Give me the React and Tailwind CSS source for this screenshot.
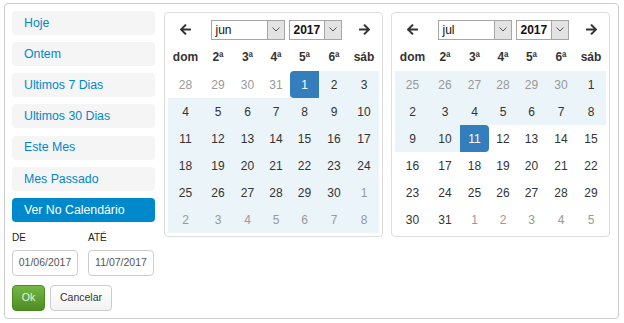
import React from 'react';

const FONT = { fontFamily: '"Liberation Sans", Arial, sans-serif' };

const RANGES = ['Hoje', 'Ontem', 'Ultimos 7 Dias', 'Ultimos 30 Dias', 'Este Mes', 'Mes Passado', 'Ver No Calendário'];
const DAY_NAMES = ['dom', '2ª', '3ª', '4ª', '5ª', '6ª', 'sáb'];

const range = (a, b) => Array.from({ length: b - a + 1 }, (_, i) => a + i);

const CALENDARS = [
  {
    month: 'jun',
    days: [...range(28, 31), ...range(1, 30), ...range(1, 8)],
    offBefore: 4,
    offAfter: 34,
    rangeFrom: 4,
    rangeTo: 41,
    start: 4,
    end: -1,
  },
  {
    month: 'jul',
    days: [...range(25, 30), ...range(1, 31), ...range(1, 5)],
    offBefore: 6,
    offAfter: 37,
    rangeFrom: 0,
    rangeTo: 16,
    start: -1,
    end: 16,
  },
];

const ArrowLeft = () => (
  <svg width="11" height="11" viewBox="0 40 448 432" fill="#333">
    <path d="M257.5 445.1l-22.2 22.2c-9.4 9.4-24.6 9.4-33.9 0L7 273c-9.4-9.4-9.4-24.6 0-33.9L201.4 44.7c9.4-9.4 24.6-9.4 33.9 0l22.2 22.2c9.5 9.5 9.3 25-.4 34.3L136.6 216H424c13.3 0 24 10.7 24 24v32c0 13.3-10.7 24-24 24H136.6l120.5 114.8c9.8 9.3 10 24.8.4 34.3z" />
  </svg>
);

const ArrowRight = () => (
  <svg width="11" height="11" viewBox="0 40 448 432" fill="#333">
    <path d="M190.5 66.9l22.2-22.2c9.4-9.4 24.6-9.4 33.9 0L441 239c9.4 9.4 9.4 24.6 0 33.9L246.6 467.3c-9.4 9.4-24.6 9.4-33.9 0l-22.2-22.2c-9.5-9.5-9.3-25 .4-34.3L311.4 296H24c-13.3 0-24-10.7-24-24v-32c0-13.3 10.7-24 24-24h287.4L190.9 101.2c-9.8-9.3-10-24.8-.4-34.3z" />
  </svg>
);

const Select = ({ value, width, bold }) => (
  <div className={`flex h-[20px] border border-[#a6a6a6] bg-white ${width}`}>
    <span className={`flex-1 pl-[4px] text-[12px] leading-[18px] text-[#111] ${bold ? 'font-bold' : ''}`}>{value}</span>
    <span className="w-[17px] flex items-center justify-center bg-[#e3e3e3] border-l border-[#a6a6a6]">
      <svg width="8" height="5" viewBox="0 0 8 5">
        <polyline points="0.5,0.5 4,4 7.5,0.5" fill="none" stroke="#555" strokeWidth="1" />
      </svg>
    </span>
  </div>
);

const Calendar = ({ cal }) => (
  <div className="w-[219px] h-[225px] border border-[#ddd] rounded-[4px] bg-white p-[3px]">
    <div className="grid grid-cols-[35px_30px_29px_28px_29px_30px_30px] text-[12px] text-[#333]">
      <div className="h-[27px] flex items-center justify-center"><ArrowLeft /></div>
      <div className="col-span-5 h-[27px] flex items-center justify-center gap-[4px]">
        <Select value={cal.month} width="w-[74px]" />
        <Select value="2017" width="w-[53px]" bold />
      </div>
      <div className="h-[27px] flex items-center justify-center"><ArrowRight /></div>

      {DAY_NAMES.map((d) => (
        <div key={d} className="h-[28px] flex items-center justify-center font-bold">{d}</div>
      ))}

      {cal.days.map((n, i) => {
        const off = i < cal.offBefore || i >= cal.offAfter;
        const inRange = i >= cal.rangeFrom && i <= cal.rangeTo;
        let cls = 'h-[27px] flex items-center justify-center';
        if (i === cal.start) cls += ' bg-[#357ebd] text-white rounded-l-[4px]';
        else if (i === cal.end) cls += ' bg-[#357ebd] text-white rounded-r-[4px]';
        else {
          if (inRange) cls += ' bg-[#ebf4f8]';
          if (off) cls += ' text-[#999]';
        }
        return <div key={i} className={cls}>{n}</div>;
      })}
    </div>
  </div>
);

export default function App() {
  return (
    <div className="w-[624px] h-[323px] bg-white pt-[3px] pl-[4px]" style={FONT}>
      <div className="w-[615px] h-[316px] border border-[#ccc] rounded-[4px] flex pl-[7px] pt-[7px]">
        <div className="w-[143px] flex flex-col">
          <div className="flex flex-col gap-[7.17px]">
            {RANGES.map((r, i) => (
              <div
                key={r}
                className={`h-[24px] rounded-[4px] pl-[12px] flex items-center text-[12.3px] ${
                  i === RANGES.length - 1 ? 'bg-[#08c] text-white' : 'bg-[#f5f5f5] text-[#08c]'
                }`}
              >
                {r}
              </div>
            ))}
          </div>
          <div className="grid grid-cols-[66px_66px] gap-x-[10px] mt-[10px]">
            <span className="text-[10px] leading-[12px] text-[#222]">DE</span>
            <span className="text-[10px] leading-[12px] text-[#222]">ATÉ</span>
            <div className="mt-[6px] h-[26px] border border-[#ccc] rounded-[4px] flex items-center justify-center text-[10.5px] text-[#555]">01/06/2017</div>
            <div className="mt-[6px] h-[26px] border border-[#ccc] rounded-[4px] flex items-center justify-center text-[10.5px] text-[#555]">11/07/2017</div>
          </div>
          <div className="flex gap-[5px] mt-[9px]">
            <button className="w-[33px] h-[26px] rounded-[4px] border border-[#4a8a22] bg-gradient-to-b from-[#74b843] to-[#4f8c25] text-[10.5px] text-[#eaf5e0]">Ok</button>
            <button className="w-[62px] h-[26px] rounded-[4px] border border-[#ccc] bg-gradient-to-b from-white to-[#f3f3f3] text-[10.5px] text-[#333]">Cancelar</button>
          </div>
        </div>
        <div className="flex gap-[8px] ml-[9px] mt-[1px]">
          {CALENDARS.map((c) => (
            <Calendar key={c.month} cal={c} />
          ))}
        </div>
      </div>
    </div>
  );
}
